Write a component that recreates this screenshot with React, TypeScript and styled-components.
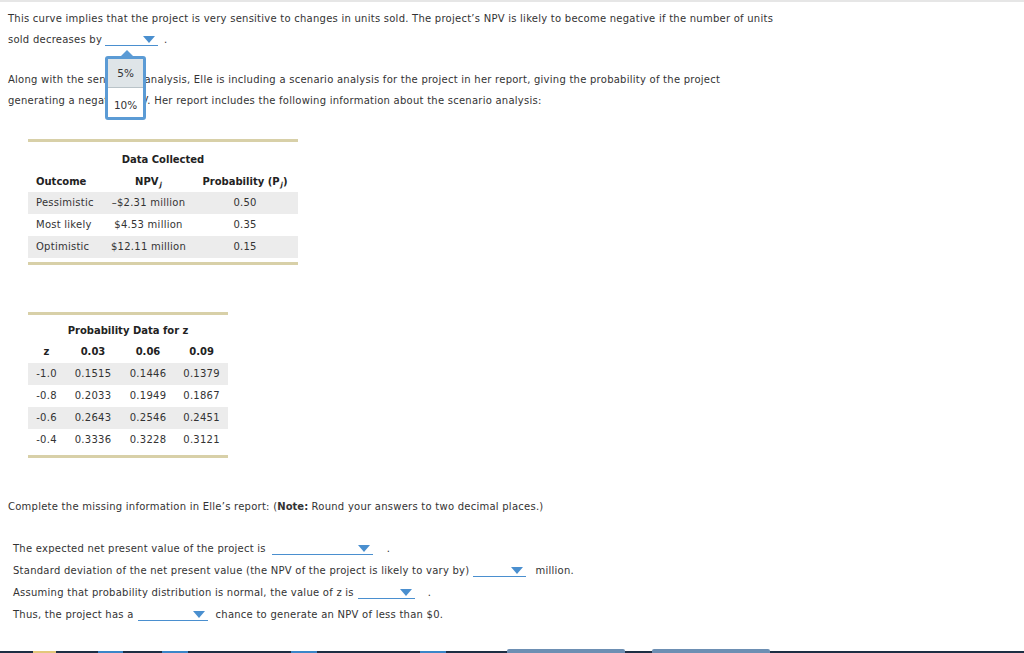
import React from "react";
import styled, { createGlobalStyle } from "styled-components";

const Global = createGlobalStyle`
  html, body { margin: 0; padding: 0; background: #fff; }
  body { font-family: "DejaVu Sans", Verdana, sans-serif; font-size: 10px; letter-spacing: 0.25px; color: #333; }
  b { letter-spacing: 0; }
`;

const Page = styled.div`
  position: relative;
  width: 1024px;
  height: 653px;
  overflow: hidden;
  border-top: 2px solid #e6e6e6;
  box-sizing: border-box;
  display: flex;
  flex-direction: column;
`;

const Para = styled.p<{ $top: number }>`
  margin: ${(p) => p.$top}px 0 0 8px;
  line-height: 21px;
  width: 769px;
`;

const DropWrap = styled.span<{ $w: number; $ml: number }>`
  position: relative;
  display: inline-block;
  width: ${(p) => p.$w}px;
  height: 12px;
  margin: 0 0 0 ${(p) => p.$ml}px;
  border-bottom: 1.5px solid #4a8fcf;
  vertical-align: -3px;
`;

const Tri = styled.span`
  position: absolute;
  right: 3px;
  top: 3px;
  width: 0;
  height: 0;
  border-left: 6px solid transparent;
  border-right: 6px solid transparent;
  border-top: 7px solid #4a8fcf;
`;

const After = styled.span<{ $gap: number }>`
  margin-left: ${(p) => p.$gap}px;
`;

const Popup = styled.div`
  position: absolute;
  left: 0px;
  top: 23px;
  width: 35px;
  border: 3px solid #5b9bd5;
  border-radius: 3px;
  background: #fff;
  z-index: 5;
  line-height: normal;
  &::before {
    content: "";
    position: absolute;
    top: -9px;
    left: 13px;
    border-left: 6px solid transparent;
    border-right: 6px solid transparent;
    border-bottom: 6px solid #5b9bd5;
  }
`;

const PopItem = styled.div<{ $sel?: boolean }>`
  height: 29px;
  display: flex;
  align-items: center;
  justify-content: center;
  font-size: 10.5px;
  letter-spacing: 0;
  color: #333;
  background: ${(p) => (p.$sel ? "#dfe5e8" : "#fff")};
  border-bottom: ${(p) => (p.$sel ? "1px solid #b9c3c8" : "none")};
  padding-top: ${(p) => (p.$sel ? "0" : "4px")};
  box-sizing: border-box;
`;

const Table = styled.table<{ $w: number; $top: number }>`
  margin: ${(p) => p.$top}px 0 0 28px;
  width: ${(p) => p.$w}px;
  border-collapse: collapse;
  table-layout: fixed;
  border-top: 3px solid #d8d0a8;
  border-bottom: 3px solid #d8d0a8;
  font-size: 10px;
  line-height: 12px;
`;

const Caption = styled.th<{ $h: number; $pt: number }>`
  font-weight: bold;
  letter-spacing: 0;
  height: ${(p) => p.$h}px;
  padding: ${(p) => p.$pt}px 0 0;
  box-sizing: border-box;
  text-align: center;
  color: #222;
`;

const Th = styled.th<{ $align?: string; $h: number }>`
  font-weight: bold;
  letter-spacing: 0;
  height: ${(p) => p.$h}px;
  text-align: ${(p) => p.$align ?? "center"};
  padding: ${(p) => (p.$align === "left" ? "0 0 0 8px" : "0")};
  color: #222;
`;

const Sub = styled.sub`
  font-size: 7px;
  line-height: 0;
  vertical-align: -2px;
  font-style: italic;
  margin-left: 1px;
`;

const Tr = styled.tr<{ $shade?: boolean }>`
  background: ${(p) => (p.$shade ? "#ececec" : "transparent")};
`;

const Td = styled.td<{ $align?: string }>`
  height: 22px;
  padding: ${(p) => (p.$align === "left" ? "0 0 0 8px" : "0")};
  text-align: ${(p) => p.$align ?? "center"};
  color: #333;
`;

const SpacerRow = styled.tr`
  height: 6px;
`;

const QList = styled.div`
  margin: 21px 0 0 13px;
  display: flex;
  flex-direction: column;
`;

const QLine = styled.div`
  line-height: 22px;
  white-space: nowrap;
`;

const BottomBar = styled.div`
  position: absolute;
  left: 0;
  right: 0;
  bottom: 0;
  height: 2px;
  background: #1d2f44;
`;

const BarSeg = styled.span<{ $l: number; $w: number; $c: string; $h?: number }>`
  position: absolute;
  left: ${(p) => p.$l}px;
  width: ${(p) => p.$w}px;
  bottom: 0;
  height: ${(p) => p.$h ?? 2}px;
  background: ${(p) => p.$c};
  border-radius: ${(p) => (p.$h ? "2px 2px 0 0" : "0")};
`;

const Dropdown: React.FC<{ w: number; ml?: number; children?: React.ReactNode }> = ({ w, ml = 4, children }) => (
  <DropWrap $w={w} $ml={ml}>
    <Tri />
    {children}
  </DropWrap>
);

const zRows = [
  ["-1.0", "0.1515", "0.1446", "0.1379"],
  ["-0.8", "0.2033", "0.1949", "0.1867"],
  ["-0.6", "0.2643", "0.2546", "0.2451"],
  ["-0.4", "0.3336", "0.3228", "0.3121"],
];

export default function App() {
  return (
    <>
      <Global />
      <Page>
        <Para $top={6}>
          This curve implies that the project is very sensitive to changes in units sold. The project’s NPV is likely to become negative if the number of units sold decreases by
          <Dropdown w={53} ml={3}>
            <Popup>
              <PopItem $sel>5%</PopItem>
              <PopItem>10%</PopItem>
            </Popup>
          </Dropdown>
          <After $gap={6}>.</After>
        </Para>
        <Para $top={19}>
          Along with the sensitivity analysis, Elle is including a scenario analysis for the project in her report, giving the probability of the project generating a negative NPV. Her report includes the following information about the scenario analysis:
        </Para>
        <Table $w={270} $top={28}>
          <colgroup>
            <col style={{ width: 77 }} />
            <col style={{ width: 87 }} />
            <col style={{ width: 106 }} />
          </colgroup>
          <thead>
            <tr>
              <Caption colSpan={3} $h={31} $pt={7}>Data Collected</Caption>
            </tr>
            <tr>
              <Th $align="left" $h={20}>Outcome</Th>
              <Th $h={20}>
                NPV<Sub>j</Sub>
              </Th>
              <Th $h={20}>
                Probability (P<Sub>j</Sub>)
              </Th>
            </tr>
          </thead>
          <tbody>
            <Tr $shade>
              <Td $align="left">Pessimistic</Td>
              <Td>–$2.31 million</Td>
              <Td>0.50</Td>
            </Tr>
            <Tr>
              <Td $align="left">Most likely</Td>
              <Td>$4.53 million</Td>
              <Td>0.35</Td>
            </Tr>
            <Tr $shade>
              <Td $align="left">Optimistic</Td>
              <Td>$12.11 million</Td>
              <Td>0.15</Td>
            </Tr>
            <SpacerRow />
          </tbody>
        </Table>
        <Table $w={200} $top={47}>
          <colgroup>
            <col style={{ width: 37 }} />
            <col style={{ width: 56 }} />
            <col style={{ width: 54 }} />
            <col style={{ width: 53 }} />
          </colgroup>
          <thead>
            <tr>
              <Caption colSpan={4} $h={28} $pt={6}>Probability Data for z</Caption>
            </tr>
            <tr>
              <Th $h={21}>z</Th>
              <Th $h={21}>0.03</Th>
              <Th $h={21}>0.06</Th>
              <Th $h={21}>0.09</Th>
            </tr>
          </thead>
          <tbody>
            {zRows.map((r, i) => (
              <Tr key={i} $shade={i % 2 === 0}>
                {r.map((c, j) => (
                  <Td key={j}>{c}</Td>
                ))}
              </Tr>
            ))}
            <SpacerRow />
          </tbody>
        </Table>
        <Para $top={38}>
          Complete the missing information in Elle’s report: (<b>Note:</b> Round your answers to two decimal places.)
        </Para>
        <QList>
          <QLine>
            The expected net present value of the project is<Dropdown w={101} ml={6} />
            <After $gap={14}>.</After>
          </QLine>
          <QLine>
            Standard deviation of the net present value (the NPV of the project is likely to vary by)
            <Dropdown w={53} ml={4} />
            <After $gap={9}>million.</After>
          </QLine>
          <QLine>
            Assuming that probability distribution is normal, the value of z is<Dropdown w={57} ml={4} />
            <After $gap={13}>.</After>
          </QLine>
          <QLine>
            Thus, the project has a<Dropdown w={70} ml={4} />
            <After $gap={8}>chance to generate an NPV of less than $0.</After>
          </QLine>
        </QList>
        <BottomBar>
          <BarSeg $l={33} $w={23} $c="#e3c77a" />
          <BarSeg $l={98} $w={25} $c="#3a86c8" />
          <BarSeg $l={162} $w={26} $c="#3a86c8" />
          <BarSeg $l={291} $w={26} $c="#3a86c8" />
          <BarSeg $l={420} $w={26} $c="#3a86c8" />
          <BarSeg $l={507} $w={118} $c="#6d8fb3" $h={4} />
          <BarSeg $l={652} $w={118} $c="#6d8fb3" $h={4} />
        </BottomBar>
      </Page>
    </>
  );
}
